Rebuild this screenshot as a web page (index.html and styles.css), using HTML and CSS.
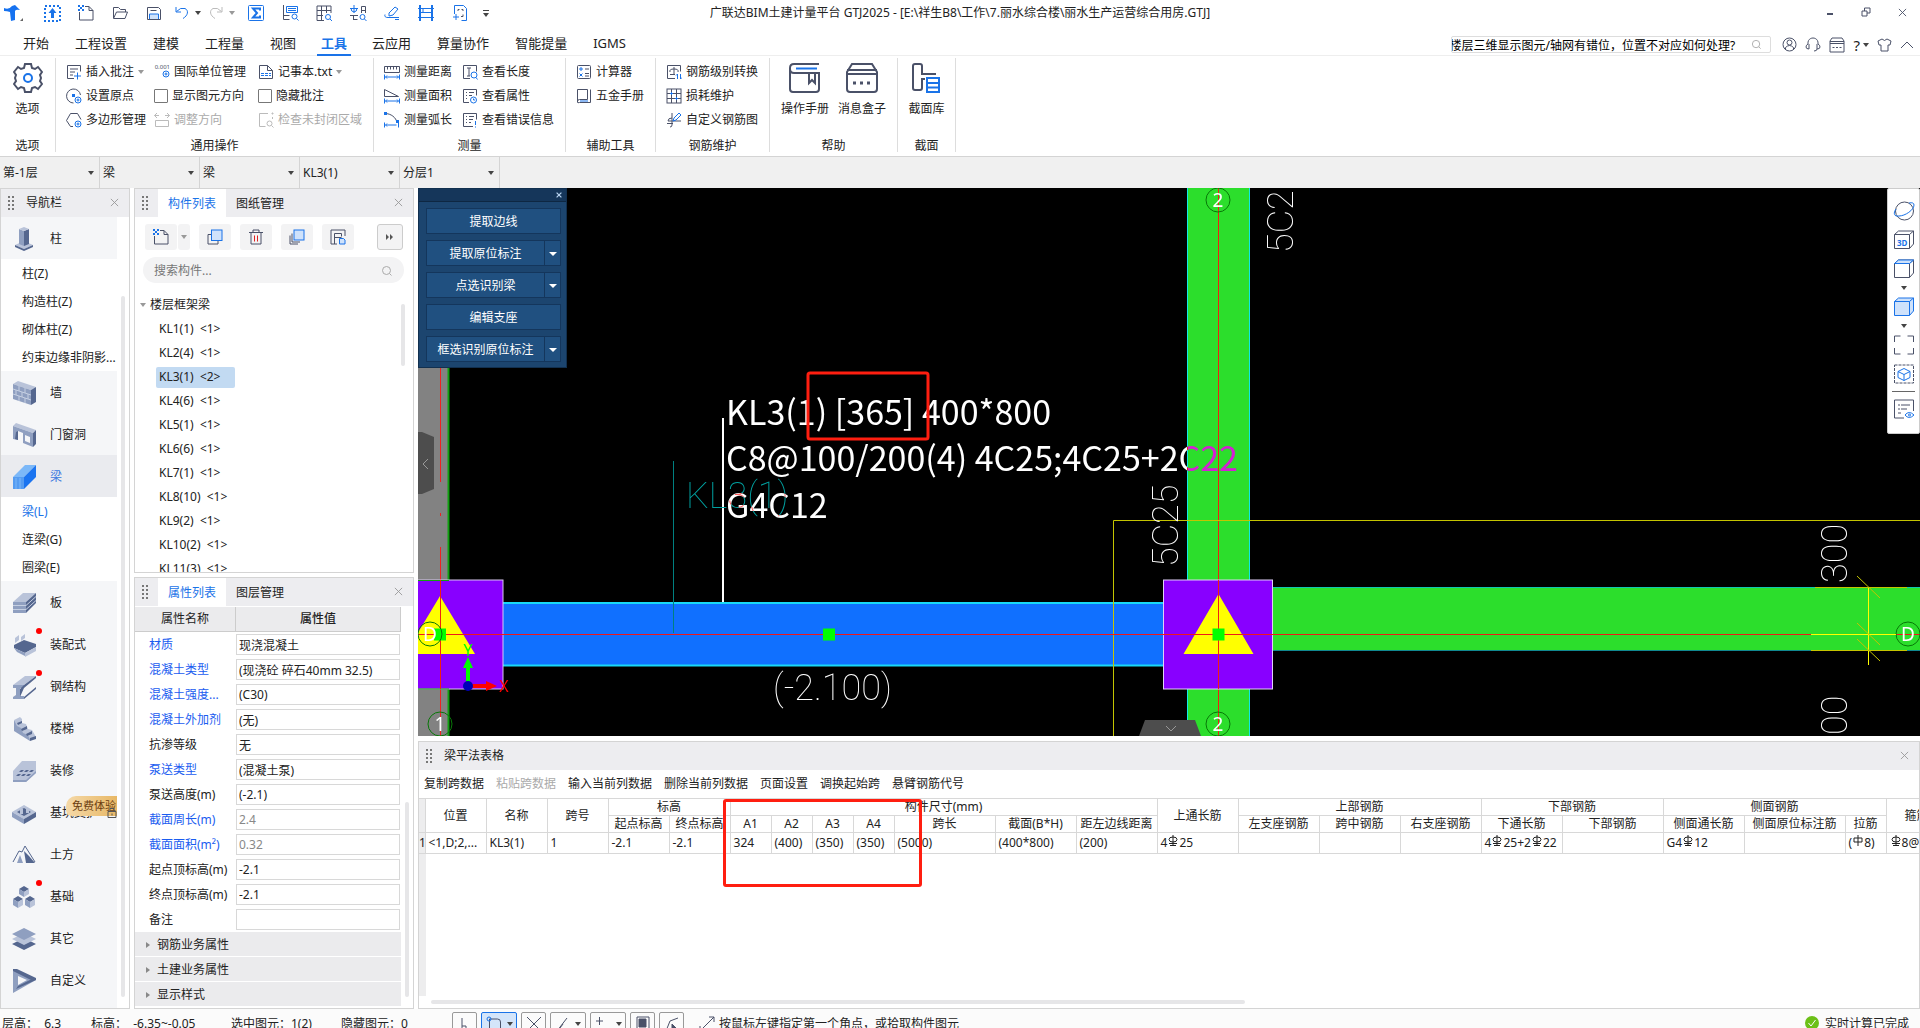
FILE: index.html
```html
<!DOCTYPE html>
<html lang="zh-CN">
<head>
    <meta charset="UTF-8">
    <meta name="viewport" content="width=device-width, initial-scale=1.0">
    <title>广联达BIM土建计量平台 GTJ2025</title>
    <link rel="stylesheet" href="styles.css">
</head>
<body>
    <!-- shared icons -->
    <svg class="sprite" aria-hidden="true">
        <symbol id="i-close" viewBox="0 0 10 10"><path d="M1 1l8 8M9 1l-8 8"/></symbol>
        <symbol id="i-grip" viewBox="0 0 8 14"><path class="dot" d="M1 0h2v2h-2zM5 0h2v2h-2zM1 4h2v2h-2zM5 4h2v2h-2zM1 8h2v2h-2zM5 8h2v2h-2zM1 12h2v2h-2zM5 12h2v2h-2z"/></symbol>
        <symbol id="i-search" viewBox="0 0 12 12"><circle cx="5.5" cy="5.5" r="4"/><path d="M8.5 8.5l2 2"/></symbol>
        <symbol id="i-new" viewBox="0 0 16 16"><path d="M7 1.5h4l4 4v9.500h-13.500v-8M11 1.500v4h4"/><path class="fb" d="M0 0h2v2h2v2h-2v-2h-2zM4 0h2v2h-2zM0 4h2v2h-2zM4 4h2v2h-2z"/></symbol>
        <symbol id="i-ruler" viewBox="0 0 16 16"><path d="M.5 2.5h15v6h-15zM3.5 2.5v3M6.5 2.5v3M9.5 2.5v3M12.5 2.5v3"/><path class="b" d="M1.5 13h13M.5 10.5v5M15.5 10.5v5M3 11.5l-1.5 1.5 1.5 1.5M13 11.5l1.5 1.5-1.5 1.5"/></symbol>
        <symbol id="i-area" viewBox="0 0 16 16"><path d="M.5 1.5l14 7h-14z"/><path class="b" d="M1.5 13h13M.5 10.5v5M15.5 10.5v5M3 11.5l-1.5 1.5 1.5 1.5M13 11.5l1.5 1.5-1.5 1.5"/></symbol>
        <symbol id="i-arc" viewBox="0 0 16 16"><path d="M1 1.5c6 0 11 4 12 9"/><path class="fb" d="M0 0h3v3h-3zM12 8h3v3h-3z"/><path class="b" d="M1.5 13h11M.5 10.5v5M14.5 11v4.5M3 11.5l-1.5 1.5 1.5 1.5"/></symbol>
        <symbol id="i-note" viewBox="0 0 16 16"><path d="M8 14.5h-6.5v-13h13v6M4 5h8M4 8h5M4 11h3"/><path class="b" d="M8 12h7M11.5 8.5v7"/></symbol>
        <symbol id="i-origin" viewBox="0 0 16 16"><path d="M14.5 7a7 7 0 1 0-7 8"/><path class="fb" d="M6 6h3v3h-3z"/><circle class="b" cx="12" cy="12" r="3"/><circle class="b" cx="12" cy="12" r="1"/></symbol>
        <symbol id="i-poly" viewBox="0 0 16 16"><path d="M7 14.5h-2.5l-4-6 4-7h7l3.5 6"/><circle class="b" cx="12" cy="12" r="3"/><circle class="b" cx="12" cy="12" r="1"/></symbol>
        <symbol id="i-txt" viewBox="0 0 16 16"><path d="M1.5 1.5h8l5 5v8h-13zM9.5 1.5v5h5"/><path class="b" d="M3 9.5h10M3 11.5h10" stroke-dasharray="3 1"/></symbol>
        <symbol id="i-adjust" viewBox="0 0 16 16"><path d="M1.5 8.5h13v6h-13zM5 3.5h-4.5M3 1l-2.5 2.5 2.5 2.5M11 3.5h4.5M13 1l2.5 2.5-2.5 2.5"/></symbol>
        <symbol id="i-region" viewBox="0 0 16 16"><path d="M10 1.5h-8.5v13h6M14.5 5v2"/><path d="M14 1h1v1h-1z"/><circle cx="11.5" cy="11.5" r="2.5"/><path d="M13.5 13.5l2 2"/></symbol>
        <symbol id="i-len" viewBox="0 0 16 16"><path d="M8 14.5h-6.5v-13h13v6M5 4h4M7 4v8M5 12h3"/><circle class="b" cx="12" cy="11" r="3"/><path class="b" d="M14 13.5l1.5 2"/></symbol>
        <symbol id="i-props" viewBox="0 0 16 16"><path d="M7 14.5h-5.5v-13h13v6M4 4.5h1M7 4.5h5M4 7.5h1M7 7.5h3M4 10.5h1"/><circle class="b" cx="11.5" cy="12" r="3"/><path class="b" d="M11.5 10.5v1.5h1.5"/></symbol>
        <symbol id="i-err" viewBox="0 0 16 16"><path d="M11 14.5h-9.5v-13h13v6M4 4.5h1M7 4.5h5M4 7.5h1M7 7.5h4M4 10.5h1M7 10.5h2"/><path class="b" d="M13.5 9v4M13.5 14.5v1"/></symbol>
        <symbol id="i-cube" viewBox="0 0 22 20"><path d="M1.5 4.5l4-3.5h15v13l-4 4.5h-15zM1.5 4.5h15v14M16.5 4.5l4-3.5"/></symbol>
        <symbol id="rebar" viewBox="0 0 10 12"><ellipse cx="5" cy="4.5" rx="4" ry="2.5"/><path d="M5 0v10M1 8.5h8M2 10.5h6"/></symbol>
        <symbol id="rebar1" viewBox="0 0 10 12"><path d="M1 3h8v4h-8zM5 0v11"/></symbol>
    </svg>

    <header class="titlebar">
        <div class="quick">
            <svg class="logo" width="22" height="18" viewBox="0 0 22 18"><path d="M1 4q5 2 8-2l3-1 5 5q-4-1-5 1v9l-4 1-1-9q-3-1-6-1z" fill="#1672f0"/><path d="M17 17h3v-3z" fill="#666"/></svg>
            <button aria-label="上传"><svg class="ic" width="17" height="17" viewBox="0 0 17 17"><path class="b" stroke-width="2" stroke-dasharray="2 2" d="M1 1h15v15h-15z"/><path class="fb" d="M8.5 3l4 5h-2.5v5h-3v-5h-2.500z"/></svg></button>
            <button aria-label="新建"><svg class="ic" width="16" height="16"><use href="#i-new"/></svg></button>
            <button aria-label="打开"><svg class="ic" width="16" height="16" viewBox="0 0 16 16"><path d="M1.5 13v-10.5h5l2 2h5v2.5M1.5 13.5l3-6.5h11l-2.5 6.5z"/></svg></button>
            <button aria-label="保存"><svg class="ic" width="16" height="16" viewBox="0 0 16 16"><path d="M1.5 2.5h11l2 2v10h-13zM4.5 5.5h6"/><path class="b lt" d="M3.5 14v-5h9v5"/></svg></button>
            <button aria-label="撤销"><svg class="ic" width="14" height="16" viewBox="0 0 14 16"><path class="b" d="M1 2v5h5M1.5 6.5q4-4.500 8.500-3c4 2 3 7-2 10"/></svg><i class="caret"></i></button>
            <button aria-label="重做"><svg class="ic dis" width="14" height="16" viewBox="0 0 14 16"><path d="M13 2v5h-5M12.5 6.5q-4-4.500-8.500-3c-4 2-3 7 2 10"/></svg><i class="caret grey"></i></button>
            <button aria-label="汇总"><svg class="ic" width="16" height="16" viewBox="0 0 16 16"><rect class="b" x=".5" y=".5" width="15" height="15" rx="1"/><path class="b" stroke-width="2" d="M12 5.500v-2h-7l4 4.500-4 4.500h7v-2"/></svg></button>
            <button aria-label="查量"><svg class="ic" width="17" height="16" viewBox="0 0 17 16"><path d="M1.5 0v14.5h6M1.5 10.5h6"/><path class="b" d="M4.500 1.500h11v6h-11zM6 3.500h8M6 5.500h8"/><circle class="b" cx="12.5" cy="11.5" r="2.5"/><path class="b" d="M14.5 13.5l2 2"/></svg></button>
            <button aria-label="查表"><svg class="ic" width="16" height="16" viewBox="0 0 16 16"><path d="M8 15.5h-7v-14.500h14v7M1 5.500h14M1 10.500h6M5.500 1v14M10.500 1v7"/><circle class="b" cx="12" cy="12" r="2.5"/><path class="b" d="M14 14l2 2"/></svg></button>
            <button aria-label="钢筋"><svg class="ic" width="17" height="16" viewBox="0 0 17 16"><path class="b" d="M0 3.500h8M4 0v8M1 3q0 4 3 4t3-4"/><path d="M11.500 8v-6.500h4v6.500M11.500 5.500h4M0 10.500h8M3.500 10.500v4.500M3.500 14.500h4"/><circle class="b" cx="12.5" cy="12" r="2.5"/><path class="b" d="M14.5 14l2 2"/></svg></button>
            <button aria-label="编辑"><svg class="ic" width="16" height="16" viewBox="0 0 16 16"><path class="b" d="M5 8l6-6 3 2-5 6-4 1zM1 9.500q-1 3 3 3h11M11 14.500h4"/></svg></button>
            <button aria-label="梁"><svg class="ic" width="16" height="16" viewBox="0 0 16 16"><path class="b" stroke-width="2" d="M2 0v16M14 0v16"/><path class="b" d="M0 3.500h16M3 7.500h10M0 12.500h16M5 3.500v4"/></svg></button>
            <button aria-label="识别"><svg class="ic" width="17" height="16" viewBox="0 0 17 16"><path class="b" d="M2.500 9v-8.500h9l3 3v12h-5M1 12h6M4 9v6"/><path d="M6 6v-1.500h1.500M11 6v-1.500h-1.500M11 9.500v2h-2"/></svg></button>
            <button class="narrow" aria-label="更多"><span class="over"></span><i class="caret"></i></button>
        </div>
        <h1>广联达BIM土建计量平台 GTJ2025 - [E:\祥生B8\工作\7.丽水综合楼\丽水生产运营综合用房.GTJ]</h1>
        <div class="winbtns">
            <button aria-label="最小化"><svg class="ic" width="10" height="10" viewBox="0 0 10 10"><path stroke-width="2" d="M2 7h6"/></svg></button>
            <button aria-label="还原"><svg class="ic" width="10" height="10" viewBox="0 0 10 10"><path d="M1 4h5v5h-5zM3.5 4v-3h5.500v5h-3"/></svg></button>
            <button aria-label="关闭"><svg class="ic" width="9" height="9"><use href="#i-close"/></svg></button>
        </div>
    </header>

    <nav class="tabs">
        <a href="#">开始</a><a href="#">工程设置</a><a href="#">建模</a><a href="#">工程量</a><a href="#">视图</a><a href="#" class="active">工具</a><a href="#">云应用</a><a href="#">算量协作</a><a href="#">智能提量</a><a href="#">IGMS</a>
        <div class="tabs-right">
            <div class="help-search"><input type="text" aria-label="搜索帮助" value="楼层三维显示图元/轴网有错位，位置不对应如何处理?"><svg class="ic grey-ic" width="11" height="11"><use href="#i-search"/></svg></div>
            <svg class="ic" width="15" height="15" viewBox="0 0 15 15"><circle cx="7.5" cy="7.5" r="6.5"/><circle cx="7.5" cy="5.5" r="2.5"/><path d="M3.5 12v-1.500q4-4 8 0v1.500"/></svg>
            <svg class="ic" width="16" height="15" viewBox="0 0 16 15"><path d="M3 7c-1-8 11-8 10 0M3 7q-2 1-2 3t3 2v-5M13 7q2 1 2 3t-3 2v-5M12 12q0 2-3 2"/></svg>
            <svg class="ic" width="16" height="16" viewBox="0 0 16 16"><path d="M1 4l2-3h10l2 3v11h-14zM1 4.500h14M1 6.500h14M3.500 10.500h2M7 10.500h2M10.500 10.500h2"/></svg>
            <span class="help">?<i class="caret"></i></span>
            <svg class="ic" width="15" height="14" viewBox="0 0 15 14"><path d="M5 1q2.500 3 5 0l4 2-1 4h-2v6h-7v-6h-2l-1-4z"/></svg>
            <svg class="ic" width="14" height="8" viewBox="0 0 14 8"><path d="M1 7l6-6 6 6"/></svg>
        </div>
    </nav>

    <section class="ribbon">
        <div class="group g-options">
            <div class="bigs">
                <button class="big"><svg class="ic" width="30" height="30" viewBox="0 0 30 30"><path stroke-width="2" d="M12 1h6l1 4 3 1 3-2 4 5-2 3 1 3-1 3 2 3-4 5-3-2-3 1-1 4h-6l-1-4-3-1-3 2-4-5 2-3-1-3 1-3-2-3 4-5 3 2 3-1z"/><circle class="b" stroke-width="2" cx="15" cy="15" r="4"/></svg>选项</button>
            </div>
            <h2>选项</h2>
        </div>
        <div class="group g-common">
            <div class="cols">
                <div class="col"><button><svg class="ic" width="16" height="16"><use href="#i-note"/></svg>插入批注<i class="caret grey"></i></button><button><svg class="ic" width="16" height="16"><use href="#i-origin"/></svg>设置原点</button><button><svg class="ic" width="16" height="16"><use href="#i-poly"/></svg>多边形管理</button></div>
                <div class="col"><button><span class="unit">0.001<svg class="ic" width="8" height="8" viewBox="0 0 8 8"><circle class="b" cx="4" cy="4" r="3"/><circle class="b" cx="4" cy="4" r="1"/></svg></span>国际单位管理</button><label><input type="checkbox">显示图元方向</label><button disabled><svg class="ic" width="16" height="16"><use href="#i-adjust"/></svg>调整方向</button></div>
                <div class="col"><button><svg class="ic" width="16" height="16"><use href="#i-txt"/></svg>记事本.txt<i class="caret grey"></i></button><label><input type="checkbox">隐藏批注</label><button disabled><svg class="ic" width="16" height="16"><use href="#i-region"/></svg>检查未封闭区域</button></div>
            </div>
            <h2>通用操作</h2>
        </div>
        <div class="group g-measure">
            <div class="cols">
                <div class="col"><button><svg class="ic" width="16" height="16"><use href="#i-ruler"/></svg>测量距离</button><button><svg class="ic" width="16" height="16"><use href="#i-area"/></svg>测量面积</button><button><svg class="ic" width="16" height="16"><use href="#i-arc"/></svg>测量弧长</button></div>
                <div class="col"><button><svg class="ic" width="16" height="16"><use href="#i-len"/></svg>查看长度</button><button><svg class="ic" width="16" height="16"><use href="#i-props"/></svg>查看属性</button><button><svg class="ic" width="16" height="16"><use href="#i-err"/></svg>查看错误信息</button></div>
            </div>
            <h2>测量</h2>
        </div>
        <div class="group g-aux">
            <div class="cols"><div class="col">
                <button><svg class="ic" width="16" height="16" viewBox="0 0 16 16"><rect x="1.5" y="1.5" width="13" height="13" rx="1"/><path class="b" d="M3 5h4M5 3v4M3.500 9.500l3 3M6.500 9.500l-3 3"/><path d="M9 5h4M9 9.500h4M9 12h4"/></svg>计算器</button>
                <button><svg class="ic" width="16" height="16" viewBox="0 0 16 16"><path d="M1.5 14.5v-13h10v10h-8q-2 0-2 2t2 1h11v-13"/><path class="b" d="M4 13h8"/></svg>五金手册</button>
            </div></div>
            <h2>辅助工具</h2>
        </div>
        <div class="group g-rebar">
            <div class="cols"><div class="col">
                <button><svg class="ic" width="16" height="16" viewBox="0 0 16 16"><path d="M9 14.5h-7.500v-13h13v6M8 3v7M4 8q-1-3 4-3t4 3M4 10.500h5"/><path class="b" d="M11.500 15v-5l-1.500 1.500M14.500 10v5l1.500-1.500"/></svg>钢筋级别转换</button>
                <button><svg class="ic" width="16" height="16" viewBox="0 0 16 16"><rect x="1" y="1" width="14" height="14"/><path d="M1 5.500h14M1 10.500h14M5.500 1v14M10.500 1v14"/><path class="b" d="M5.500 4v3M4 5.500h3M10.500 9v3M9 10.500h3"/></svg>损耗维护</button>
                <button><svg class="ic" width="16" height="16" viewBox="0 0 16 16"><path d="M6 1v12q0 2-2 2M6 6q-4 0-4 3h13M1 11.500h6"/><path class="b" d="M7 9l1-3 5-5 2 2-5 5z"/></svg>自定义钢筋图</button>
            </div></div>
            <h2>钢筋维护</h2>
        </div>
        <div class="group g-help">
            <div class="bigs">
                <button class="big"><svg class="ic" width="32" height="30" viewBox="0 0 32 30"><path stroke-width="2" d="M30 1h-25q-4 0-4 4v21q0 3 3 3h23q3 0 3-3v-16h-25q-4 0-4-4M20 10v10l3-3 3 3v-10"/><path class="b" stroke-width="2" d="M7 5.500h21"/></svg>操作手册</button>
                <button class="big"><svg class="ic" width="32" height="30" viewBox="0 0 32 30"><path stroke-width="2" d="M1 9l5-8h20l5 8v17q0 3-3 3h-24q-3 0-3-3zM1 7h30M1 11h30"/><path stroke-width="3" d="M7 20h3M14 20h3M21 20h3"/></svg>消息盒子</button>
            </div>
            <h2>帮助</h2>
        </div>
        <div class="group g-section">
            <div class="bigs">
                <button class="big"><svg class="ic" width="30" height="30" viewBox="0 0 30 30"><path stroke-width="2" d="M25 11h-14v-8q0-2-2-2h-5q-2 0-2 2v22q0 2 2 2h5q2 0 2-2v-9h3"/><path class="b" stroke-width="2" d="M16 15h12v14h-12zM16 20h12M16 24.500h12"/></svg>截面库</button>
            </div>
            <h2>截面</h2>
        </div>
    </section>

    <section class="combos">
        <div class="combo"><select aria-label="楼层"><option>第-1层</option></select><i class="caret"></i></div>
        <div class="combo"><select aria-label="构件大类"><option>梁</option></select><i class="caret"></i></div>
        <div class="combo"><select aria-label="构件类型"><option>梁</option></select><i class="caret"></i></div>
        <div class="combo"><select aria-label="构件"><option>KL3(1)</option></select><i class="caret"></i></div>
        <div class="combo"><select aria-label="分层"><option>分层1</option></select><i class="caret"></i></div>
    </section>

    <main>
        <aside class="panel navpanel">
            <div class="phead"><svg class="grip" width="8" height="14"><use href="#i-grip"/></svg><span>导航栏</span><button class="x" aria-label="关闭"><svg class="ic" width="9" height="9"><use href="#i-close"/></svg></button></div>
            <div class="navbody">
                <ul class="navlist">
                    <li class="cat"><svg width="24" height="24" viewBox="0 0 24 24"><path class="c1" d="M3 18l9-4 9 4-9 4z"/><path class="c3" d="M3 18l9 4 9-4v2l-9 4-9-4z"/><path class="c2" d="M7 2l5 2v15l-5-2z"/><path class="c3" d="M12 4l5-2v15l-5 2z"/><path class="c1" d="M7 2l5-2 5 2-5 2z"/></svg>柱</li>
                    <li class="sub">柱(Z)</li>
                    <li class="sub">构造柱(Z)</li>
                    <li class="sub">砌体柱(Z)</li>
                    <li class="sub">约束边缘非阴影...</li>
                    <li class="cat"><svg width="24" height="24" viewBox="0 0 24 24"><path class="c1" d="M1 3l5-3 18 6-5 3z"/><path class="c2" d="M1 3l18 6v15l-18-6z"/><path class="c3" d="M19 9l5-3v15l-5 3z"/><path class="ln" d="M1 8l18 6M1 13l18 6M7 5v5M13 7v5M4 9v5M10 11v5M16 13v5M7 15v5M13 17v5"/></svg>墙</li>
                    <li class="cat"><svg width="24" height="24" viewBox="0 0 24 24"><path class="c1" d="M1 3l3-3 20 7-3 3z"/><path class="c2" fill-rule="evenodd" d="M1 3l20 7v14l-10-4v-10l-5-2v9l-5-1zM13 12v6l5 2v-6z"/><path class="c3" d="M21 10l3-3v14l-3 3zM4 9l2-1v9l-3-1z"/></svg>门窗洞</li>
                    <li class="cat active"><svg width="24" height="24" viewBox="0 0 24 24"><path fill="#7cb8f8" d="M1 12l12-12h11l-12 12z"/><path fill="#559cf2" d="M1 12h11v12h-11z"/><path fill="#1b74f0" d="M12 12l12-12v12l-12 12z"/><path class="ln" d="M4 13v11M8 13v11"/></svg>梁</li>
                    <li class="sub on">梁(L)</li>
                    <li class="sub">连梁(G)</li>
                    <li class="sub">圈梁(E)</li>
                    <li class="cat"><svg width="24" height="24" viewBox="0 0 24 24"><path class="c1" d="M1 11l10-9h13l-10 9z"/><path class="c2" d="M1 11h13v11h-13z"/><path class="c3" d="M14 11l10-9v10l-10 10z"/><path class="ln" d="M1 14.500h13l10-9M1 18.500h13l10-9"/></svg>板</li>
                    <li class="cat"><svg width="24" height="24" viewBox="0 0 24 24"><path class="c1" d="M3 5l4-3v5l-4 3zM9 4l4-3v4l-4 3z"/><path class="c3" d="M2 12l10-5 12 4v3l-11 6-11-5z"/><path class="c2" d="M2 15l11 5v3l-8-4z"/><path class="c1" d="M13 20l11-6v4l-11 6z"/></svg>装配式<b class="red"></b></li>
                    <li class="cat"><svg width="24" height="24" viewBox="0 0 24 24"><path class="c1" d="M1 10l12-9h11l-12 9z"/><path class="c2" d="M1 10h11v3h-4v8h4v3h-11v-2l3-2v-7h-3z"/><path class="c3" d="M12 10l12-9v2l-12 10-4 9v-8zM12 22l12-10v2l-12 10z"/></svg>钢结构<b class="red"></b></li>
                    <li class="cat"><svg width="24" height="24" viewBox="0 0 24 24"><path class="c2" d="M2 3l16 16v5l-16-10z"/><path class="c1" d="M2 3l6-3 2 2v4l4 1 2 5 4 1 4 7-6 3-2-5-5-2-2-5-4-2z"/><path class="c3" d="M5 6l5-2v2l-4 2zM9 12l6-3v3l-5 2zM14 17l6-3v3l-5 2zM18 24v-3l6-2v3z"/></svg>楼梯</li>
                    <li class="cat"><svg width="24" height="24" viewBox="0 0 24 24"><path class="c1" d="M1 12l9-10h14v12l-10 9h-13z"/><path class="c2" d="M1 21h13l10-9v2l-10 9h-13z"/><path class="c3" d="M9 11h3l-2 2h-3zM14 11h3l-2 2h-3zM19 11h3l-2 2h-3zM6 15h3l-2 2h-3zM11 15h3l-2 2h-3zM16 15h3l-2 2h-3z"/></svg>装修</li>
                    <li class="cat"><svg width="24" height="24" viewBox="0 0 24 24"><path class="c1" d="M0 11l12-7 12 7-12 7z"/><path class="c3" d="M5 11l7-4 7 4-7 4z"/><path class="c1" d="M8 8h3v5h-3zM14 7h3v5h-3z"/><path class="c2" d="M0 11l12 7v5l-12-7z"/><path class="c3" d="M24 11l-12 7v5l12-7z"/></svg>基坑支护<span class="trial">免费体验</span><svg class="lock" width="10" height="12" viewBox="0 0 10 12"><path d="M1 4.500h8v6h-8zM3 4.500v-3h4v3M5 6.500v2"/></svg></li>
                    <li class="cat"><svg width="24" height="24" viewBox="0 0 24 24"><path class="mt" d="M1 19l6-11 3 1 3-6 5 8 5 8"/><path class="c3" d="M12 8l5 5 6 7h-9z"/><path class="c2" d="M8 12l3 8h-6z"/></svg>土方</li>
                    <li class="cat"><svg width="24" height="24" viewBox="0 0 24 24"><path class="c3" d="M7 4l5-3 5 3-5 3zM1 14l5-3 5 3-5 3zM13 14l5-3 5 3-5 3z"/><path class="c2" d="M7 4l5 3v5l-5-3zM1 14l5 3v6l-5-3zM13 14l5 3v6l-5-3z"/><path class="c1" d="M17 4l-5 3v5l5-3zM11 14l-5 3v6l5-3zM23 14l-5 3v6l5-3z"/></svg>基础<b class="red"></b></li>
                    <li class="cat"><svg width="24" height="24" viewBox="0 0 24 24"><path class="c3" d="M0 17l12-6 12 6-12 6z"/><path class="c1" d="M0 12l12-6 12 6-12 6z"/><path class="c2" d="M0 7l12-6 12 6-12 6z"/></svg>其它</li>
                    <li class="cat"><svg width="24" height="24" viewBox="0 0 24 24"><path class="c2" fill-rule="evenodd" d="M1 0l23 11-23 13zM6 7v9l9-5z"/><path class="c3" d="M1 0l4 0 19 9v2l-3 1-20-10zM4 20l2-3 14-7 4 1z"/></svg>自定义</li>
                </ul>
                <div class="vscroll nav-scroll"></div>
            </div>
        </aside>

        <div class="mid">
            <section class="panel complist">
                <div class="phead"><svg class="grip" width="8" height="14"><use href="#i-grip"/></svg><button class="ptab on">构件列表</button><button class="ptab">图纸管理</button><button class="x" aria-label="关闭"><svg class="ic" width="9" height="9"><use href="#i-close"/></svg></button></div>
                <div class="ctools">
                    <div class="split"><button aria-label="新建构件"><svg class="ic" width="16" height="16"><use href="#i-new"/></svg></button><button class="dd" aria-label="新建选项"><i class="caret grey"></i></button></div>
                    <button aria-label="复制"><svg class="ic" width="16" height="16" viewBox="0 0 16 16"><path d="M4 5.500h-3v9.500h10v-3"/><rect class="b lt" x="4.5" y="1" width="10.5" height="10.5"/></svg></button>
                    <button aria-label="删除"><svg class="ic" width="16" height="16" viewBox="0 0 16 16"><path d="M1 3.500h14M3 3.500v11.500h10v-11.500M5 3v-2h6v2"/><path stroke="#e02020" d="M6.500 6.500v6M9.500 6.500v6"/></svg></button>
                    <button aria-label="层间复制"><svg class="ic" width="16" height="16" viewBox="0 0 16 16"><path d="M3 4.500v8.500h8M1 6.500v8.500h8"/><rect class="b lt" x="5" y="1" width="10" height="10"/></svg></button>
                    <button aria-label="存档"><svg class="ic" width="16" height="16" viewBox="0 0 16 16"><path d="M7 15h-6v-14h14v6M4.500 15v-10.500h7v3M4.500 8.500h7"/><path class="b lt" d="M9.500 9.500h4l1.500 1.500v4h-5.500z"/></svg></button>
                    <button class="more" aria-label="更多"><svg width="8" height="6" viewBox="0 0 8 6"><path d="M0 0l3 3-3 3zM4 0l3 3-3 3z" fill="#555"/></svg></button>
                </div>
                <div class="csearch"><input type="text" aria-label="搜索构件" placeholder="搜索构件..."><svg class="ic grey-ic" width="12" height="12"><use href="#i-search"/></svg></div>
                <div class="treewrap">
                    <ul class="tree">
                        <li class="root"><i class="caret grey"></i>楼层框架梁</li>
                        <li>KL1(1)&nbsp; &lt;1&gt;</li>
                        <li>KL2(4)&nbsp; &lt;1&gt;</li>
                        <li class="sel">KL3(1)&nbsp; &lt;2&gt;</li>
                        <li>KL4(6)&nbsp; &lt;1&gt;</li>
                        <li>KL5(1)&nbsp; &lt;1&gt;</li>
                        <li>KL6(6)&nbsp; &lt;1&gt;</li>
                        <li>KL7(1)&nbsp; &lt;1&gt;</li>
                        <li>KL8(10)&nbsp; &lt;1&gt;</li>
                        <li>KL9(2)&nbsp; &lt;1&gt;</li>
                        <li>KL10(2)&nbsp; &lt;1&gt;</li>
                        <li>KL11(3)&nbsp; &lt;1&gt;</li>
                    </ul>
                    <div class="vscroll tree-scroll"></div>
                </div>
            </section>

            <section class="panel props">
                <div class="phead"><svg class="grip" width="8" height="14"><use href="#i-grip"/></svg><button class="ptab on">属性列表</button><button class="ptab">图层管理</button><button class="x" aria-label="关闭"><svg class="ic" width="9" height="9"><use href="#i-close"/></svg></button></div>
                <div class="pbody">
                    <div class="plist">
                        <div class="prow ph"><span>属性名称</span><b>属性值</b></div>
                        <div class="prow"><label class="blue" for="p1">材质</label><input id="p1" value="现浇混凝土"></div>
                        <div class="prow"><label class="blue" for="p2">混凝土类型</label><input id="p2" value="(现浇砼 碎石40mm 32.5)"></div>
                        <div class="prow"><label class="blue" for="p3">混凝土强度...</label><input id="p3" value="(C30)"></div>
                        <div class="prow"><label class="blue" for="p4">混凝土外加剂</label><input id="p4" value="(无)"></div>
                        <div class="prow"><label for="p5">抗渗等级</label><input id="p5" value="无"></div>
                        <div class="prow"><label class="blue" for="p6">泵送类型</label><input id="p6" value="(混凝土泵)"></div>
                        <div class="prow"><label for="p7">泵送高度(m)</label><input id="p7" value="(-2.1)"></div>
                        <div class="prow"><label class="blue" for="p8">截面周长(m)</label><input id="p8" class="ro" readonly value="2.4"></div>
                        <div class="prow"><label class="blue" for="p9">截面面积(m²)</label><input id="p9" class="ro" readonly value="0.32"></div>
                        <div class="prow"><label for="p10">起点顶标高(m)</label><input id="p10" value="-2.1"></div>
                        <div class="prow"><label for="p11">终点顶标高(m)</label><input id="p11" value="-2.1"></div>
                        <div class="prow"><label for="p12">备注</label><input id="p12" value=""></div>
                        <button class="pgroup"><i class="tri"></i>钢筋业务属性</button>
                        <button class="pgroup"><i class="tri"></i>土建业务属性</button>
                        <button class="pgroup"><i class="tri"></i>显示样式</button>
                    </div>
                    <div class="vscroll prop-scroll"></div>
                </div>
            </section>
        </div>

        <div class="work">
            <section class="canvas">
                <svg class="drawing" width="100%" height="100%">
                    <g transform="translate(-418 -188)">
                        <!-- axis 1 wall -->
                        <rect x="418" y="188" width="30" height="548" fill="#828282"/>
                        <path d="M448.500 188v548" stroke="#12a012" stroke-width="2"/>
                        <path d="M440.500 188v294M440.500 513v3M440.500 547v189" stroke="#f02020"/>
                        <!-- beams -->
                        <rect x="1187" y="188" width="63" height="548" fill="#2cde2c"/>
                        <path d="M1187.500 188v548M1249.500 188v548" stroke="#10e8e8"/>
                        <rect x="1273" y="587" width="647" height="63" fill="#2cde2c"/>
                        <path d="M1273 587.500h647" stroke="#10c8b0"/>
                        <path d="M1273 650.500h647" stroke="#108890"/>
                        <path d="M1218.500 188v548" stroke="#f02010"/>
                        <rect x="502" y="602" width="661" height="64" fill="#1070ff"/>
                        <path d="M502 603h661M502 665.500h661" stroke="#18d8f8" stroke-width="2"/>
                        <path d="M673.500 461v172" stroke="#008080"/>
                        <path d="M723 418v184" stroke="#fff" stroke-width="2"/>
                        <path d="M1113.500 736v-215.500h806.500" fill="none" stroke="#c4c400"/>
                        <!-- supports -->
                        <rect x="417" y="580" width="86" height="109" fill="#8800ff" stroke="#d8c8f0"/>
                        <path d="M418 580.500h31M418 689h31" stroke="#12a012"/>
                        <rect x="1163.500" y="580" width="109" height="109" fill="#8800ff" stroke="#e0d0f8"/>
                        <path d="M440 596l35 58h-70zM1218.500 594l35 60h-70z" fill="#ff0"/>
                        <path d="M440.500 580v109M1218.500 580v109" stroke="#f02010"/>
                        <path d="M418 634.500h1502" stroke="#f01818"/>
                        <path d="M434 628.500h12v12h-12zM823 628.500h12v12h-12zM1212.500 628.500h12v12h-12z" fill="#0f0"/>
                        <!-- axis bubbles -->
                        <g fill="none" stroke="#087808"><circle cx="430" cy="634" r="12"/><circle cx="440" cy="724" r="12"/><circle cx="1218" cy="200" r="12"/><circle cx="1218" cy="724" r="12"/><circle cx="1908" cy="634" r="12"/></g>
                        <!-- dimension -->
                        <path d="M1868.500 587v78M1811 634.500h85" stroke="#ff0"/>
                        <path d="M1815 587.500h92M1811 650.500h96M1857 576l23 22M1857 623l23 22M1857 639l23 22" stroke="#c4c400"/>
                        <g class="bubble"><text x="430" y="641">D</text><text x="440" y="731">1</text><text x="1218" y="207">2</text><text x="1218" y="731">2</text><text x="1908" y="641">D</text></g>
                        <!-- view axes -->
                        <path d="M468 686v-20" stroke="#0f0" stroke-width="4"/><path d="M468 657l5 11h-10z" fill="#0f0"/>
                        <path d="M468 686h20" stroke="#f00" stroke-width="4"/><path d="M497 686l-11-5v10z" fill="#f00"/>
                        <circle cx="468" cy="686" r="5" fill="#0000b8"/>
                        <g class="axes"><text x="468" y="656" fill="#0f0">Y</text><text x="504" y="692" fill="#f00">X</text></g>
                        <!-- cad labels -->
                        <g class="cad">
                            <text class="teal" x="686" y="508">KL3(1)</text>
                            <text x="773" y="700">(-2.100)</text>
                            <text transform="translate(1178 567) rotate(-90)">5C25</text>
                            <text transform="translate(1293 253) rotate(-90)">5C2</text>
                            <text transform="translate(1847 583) rotate(-90)">300</text>
                            <text transform="translate(1847 735) rotate(-90)">00</text>
                        </g>
                        <g class="mark"><text x="726" y="425">KL3(1) [365] 400*800</text><text x="726" y="471">C8@100/200(4) 4C25;4C25+2C22</text><text x="726" y="518">G4C12</text></g>
                        <path d="M418 432h4l12 5v52l-12 5h-4z" fill="#4d4d4d"/><path d="M428 459l-5 5 5 5" fill="none" stroke="#999"/>
                        <path d="M1139 736l6-16h50l6 16z" fill="#4d4d4d"/><path d="M1166 726l5 5 5-5" fill="none" stroke="#999"/>
                        <rect x="808" y="373" width="120" height="66" rx="2" fill="none" stroke="#ff1e10" stroke-width="3"/>
                    </g>
                </svg>
                <div class="cadbox">
                    <div class="cadhead"><button aria-label="关闭"><svg width="6" height="6" viewBox="0 0 10 10"><use href="#i-close"/></svg></button></div>
                    <div class="cadrow"><button>提取边线</button></div>
                    <div class="cadrow"><button>提取原位标注</button><button class="dd" aria-label="展开"><i class="caret"></i></button></div>
                    <div class="cadrow"><button>点选识别梁</button><button class="dd" aria-label="展开"><i class="caret"></i></button></div>
                    <div class="cadrow"><button>编辑支座</button></div>
                    <div class="cadrow"><button>框选识别原位标注</button><button class="dd" aria-label="展开"><i class="caret"></i></button></div>
                </div>
                <div class="viewbar">
                    <button aria-label="动态观察"><svg class="ic" width="22" height="20" viewBox="0 0 22 20"><circle cx="11.5" cy="10" r="9"/><path class="b" d="M16 2q5-1 5 2c0 5-9 11-15 11-5 1-6-3-3-7"/></svg></button>
                    <button aria-label="三维"><svg class="ic" width="22" height="20"><use href="#i-cube"/><text x="4" y="16">3D</text></svg></button>
                    <button aria-label="俯视"><svg class="ic" width="22" height="20"><use href="#i-cube"/><path class="b lt" d="M1.5 4.500l4-3.500h15l-4 3.500z"/></svg></button>
                    <i class="caret"></i>
                    <button aria-label="实体"><svg class="ic cubeb" width="22" height="20"><use href="#i-cube"/></svg></button>
                    <i class="caret"></i>
                    <button aria-label="全屏"><svg class="ic" width="22" height="20" viewBox="0 0 22 20"><path d="M1.5 7v-6h6M14.500 1h6v6M20.500 13v6h-6M7.500 19h-6v-6"/></svg></button>
                    <button aria-label="局部三维"><svg class="ic" width="22" height="20" viewBox="0 0 22 20"><rect x="1.5" y="1" width="19" height="18" stroke-dasharray="3 1"/><path class="b" d="M11 4.500l6 3v6l-6 3-6-3v-6zM5 7.500l6 3 6-3M11 10.500v6"/></svg></button>
                    <hr>
                    <button aria-label="显示设置"><svg class="ic" width="22" height="20" viewBox="0 0 22 20"><path d="M11 19h-9.500v-18h19v11M5 6h2M8 6h9M5 10h2M8 10h6M5 14h3"/><path class="b" d="M12 16q4-5 9 0-5 5-9 0z"/><circle class="b" cx="16.5" cy="16" r="1"/></svg></button>
                </div>
            </section>

            <section class="panel gridpanel">
                <div class="phead"><svg class="grip" width="8" height="14"><use href="#i-grip"/></svg><span>梁平法表格</span><button class="x" aria-label="关闭"><svg class="ic" width="9" height="9"><use href="#i-close"/></svg></button></div>
                <div class="gtools"><button>复制跨数据</button><button disabled>粘贴跨数据</button><button>输入当前列数据</button><button>删除当前列数据</button><button>页面设置</button><button>调换起始跨</button><button>悬臂钢筋代号</button></div>
                <div class="gwrap">
                    <table>
                        <colgroup><col class="w6"><col class="w61" span="5"><col class="w41" span="4"><col class="w101"><col class="w81" span="7"><col class="w101"><col class="w81"><col class="w101"><col class="w41"><col class="w81"></colgroup>
                        <thead>
                            <tr><th rowspan="2"></th><th rowspan="2">位置</th><th rowspan="2">名称</th><th rowspan="2">跨号</th><th colspan="2">标高</th><th colspan="7">构件尺寸(mm)</th><th rowspan="2">上通长筋</th><th colspan="3">上部钢筋</th><th colspan="2">下部钢筋</th><th colspan="3">侧面钢筋</th><th class="cut" rowspan="2">箍筋</th></tr>
                            <tr><th>起点标高</th><th>终点标高</th><th>A1</th><th>A2</th><th>A3</th><th>A4</th><th>跨长</th><th>截面(B*H)</th><th>距左边线距离</th><th>左支座钢筋</th><th>跨中钢筋</th><th>右支座钢筋</th><th>下通长筋</th><th>下部钢筋</th><th>侧面通长筋</th><th>侧面原位标注筋</th><th>拉筋</th></tr>
                        </thead>
                        <tbody>
                            <tr><td class="num">1</td><td>&lt;1,D;2,...</td><td>KL3(1)</td><td>1</td><td>-2.1</td><td>-2.1</td><td>324</td><td>(400)</td><td>(350)</td><td>(350)</td><td>(5000)</td><td>(400*800)</td><td>(200)</td><td>4<svg class="rb"><use href="#rebar"/></svg>25</td><td></td><td></td><td></td><td>4<svg class="rb"><use href="#rebar"/></svg>25+2<svg class="rb"><use href="#rebar"/></svg>22</td><td></td><td>G4<svg class="rb"><use href="#rebar"/></svg>12</td><td></td><td>(<svg class="rb"><use href="#rebar1"/></svg>8)</td><td><svg class="rb"><use href="#rebar"/></svg>8@</td></tr>
                        </tbody>
                    </table>
                    <div class="gutter"></div>
                </div>
                <div class="hscroll"></div>
                <div class="redbox"></div>
            </section>
        </div>
    </main>

    <footer>
        <div class="stat"><span class="s1">层高：&nbsp; 6.3</span><span class="s2">标高：&nbsp; -6.35~-0.05</span><span class="s3">选中图元：1(2)</span><span class="s4">隐藏图元：0</span></div>
        <div class="sbtns">
            <button aria-label="正交"><svg class="ic" width="14" height="16" viewBox="0 0 14 16"><path d="M4 2v13h8M4 10h4v5"/></svg></button>
            <button class="wide on" aria-label="矩形"><svg class="ic" width="16" height="16" viewBox="0 0 16 16"><path d="M3.500 14v-11h8q3 0 3 3v8"/><circle class="b" cx="3" cy="3" r="2"/></svg><i class="caret"></i></button>
            <button aria-label="交点"><svg class="ic" width="16" height="16" viewBox="0 0 16 16"><path d="M1 1l14 14M15 1l-14 14"/></svg></button>
            <button class="wide" aria-label="直线"><svg class="ic" width="14" height="16" viewBox="0 0 14 16"><path d="M1 15l10-13M4 12l3-4"/></svg><i class="caret"></i></button>
            <button class="wide" aria-label="偏移"><svg class="ic" width="16" height="16" viewBox="0 0 16 16"><path d="M1 5h7M4.500 1v8"/><path stroke-width="2" d="M7 13h8"/></svg><i class="caret"></i></button>
            <button aria-label="选择"><svg class="ic" width="14" height="16" viewBox="0 0 14 16"><path d="M1 1h12v13h-12z"/><path d="M3 3h7v8h-7z" fill="#4a5168"/></svg></button>
            <button aria-label="折线选择"><svg class="ic" width="14" height="16" viewBox="0 0 14 16"><path d="M1 15l4-10 8-3"/><path d="M7 8l6 6h-6z" fill="#4a5168"/></svg></button>
        </div>
        <div class="hint"><svg class="ic" width="16" height="16" viewBox="0 0 16 16"><path d="M1 15l14-14M10 1h5v5M1 10v5h5"/></svg>按鼠标左键指定第一个角点，或拾取构件图元</div>
        <div class="done"><svg width="14" height="14" viewBox="0 0 14 14"><circle cx="7" cy="7" r="7" fill="#6cc018"/><path d="M3.500 7l2.500 3 4.500-6" fill="none" stroke="#fff"/></svg>实时计算已完成</div>
    </footer>
</body>
</html>
```
FILE: styles.css
```css
* {
    box-sizing: border-box;
}
body {
    margin: 0;
    height: 100vh;
    overflow: hidden;
    display: flex;
    flex-direction: column;
    background: #fff;
    color: #222;
    font-family: "Noto Sans", "Noto Sans CJK SC", sans-serif;
    font-size: 12px;
    line-height: 16px;
}
button, input, select {
    font: inherit;
    color: inherit;
    border: none;
    background: none;
    padding: 0;
    margin: 0;
}
button {
    white-space: nowrap;
    cursor: pointer;
}
ul {
    list-style: none;
    margin: 0;
    padding: 0;
}
h1, h2 {
    margin: 0;
    font-size: 12px;
    font-weight: normal;
    text-align: center;
}
.sprite {
    position: absolute;
    width: 0;
    height: 0;
}

/* icons */
.ic {
    fill: none;
    stroke: #4a5168;
    flex: none;
}
.ic .b, symbol .b {
    stroke: #1a73e8;
}
.fb {
    fill: #1a73e8;
    stroke: none;
}
.lt {
    fill: #cfe2fb;
}
.dot {
    fill: #777;
    stroke: none;
}
.dis {
    stroke: #bbb;
}
.grey-ic {
    stroke: #aaa;
}
.c1 { fill: #b9c3d9; }
.c2 { fill: #8f9fc0; }
.c3 { fill: #55678f; }
.ln {
    fill: none;
    stroke: #c5cfe2;
}
.active .ln {
    stroke: #7cb8f8;
}
.mt {
    fill: none;
    stroke: #55678f;
}
.caret {
    flex: none;
    width: 0;
    height: 0;
    border: 3px solid transparent;
    border-top: 4px solid #444;
    border-bottom: none;
}
.caret.grey {
    border-top-color: #999;
}

/* title bar */
.titlebar {
    flex: none;
    height: 26px;
    display: grid;
    grid-template-columns: 1fr auto 1fr;
    align-items: center;
}
.quick {
    display: flex;
    align-items: center;
}
.logo {
    margin: 0 10px 0 3px;
}
.quick button {
    width: 34px;
    height: 24px;
    display: flex;
    align-items: center;
    justify-content: center;
    gap: 6px;
}
.quick .narrow {
    width: 18px;
    flex-direction: column;
    gap: 2px;
}
.over {
    width: 6px;
    height: 1px;
    background: #444;
}
.winbtns {
    display: flex;
    justify-content: flex-end;
}
.winbtns button {
    width: 36px;
    height: 24px;
}

/* menu tabs */
.tabs {
    flex: none;
    height: 30px;
    padding-left: 10px;
    display: flex;
    border-bottom: 1px solid #eee;
    font-size: 13px;
}
.tabs a {
    padding: 0 13px;
    line-height: 34px;
    height: 30px;
    color: #222;
    text-decoration: none;
    overflow: hidden;
}
.tabs a.active {
    color: #1a73e8;
    font-weight: bold;
    padding: 0 4px;
    margin: 0 8px;
    border-bottom: 2px solid #1a73e8;
}
.tabs-right {
    margin-left: auto;
    padding: 8px 6px 0 0;
    display: flex;
    align-items: center;
    gap: 8px;
}
.help-search {
    width: 320px;
    height: 17px;
    padding-right: 8px;
    margin-right: 3px;
    border: 1px solid #ddd;
    border-radius: 2px;
    display: flex;
    align-items: center;
}
.help-search input {
    flex: 1;
    font-size: 12px;
    line-height: 14px;
    height: 15px;
    text-indent: -3px;
    color: #000;
}
.help {
    display: flex;
    align-items: center;
    gap: 3px;
    font-size: 15px;
}

/* ribbon */
.ribbon {
    flex: none;
    height: 101px;
    display: flex;
    border-bottom: 1px solid #d4d4d4;
    padding: 2px 0 4px;
}
.group {
    border-right: 1px solid #ddd;
    display: flex;
    flex-direction: column;
    justify-content: space-between;
    padding: 1px 0 0;
}
.group h2 {
    height: 18px;
    line-height: 24px;
}
.g-options { width: 56px; }
.g-common { width: 318px; }
.g-measure { width: 192px; }
.g-aux { width: 90px; }
.g-rebar { width: 114px; }
.g-help { width: 128px; }
.g-section { width: 58px; }
.cols {
    display: flex;
    gap: 10px;
    padding-left: 10px;
}
.col {
    display: flex;
    flex-direction: column;
    align-items: flex-start;
    gap: 8px;
    padding-top: 5px;
}
.g-common .col:nth-child(1) { width: 78px; }
.g-common .col:nth-child(2) { width: 94px; }
.g-measure .col:nth-child(1) { width: 68px; }
.col button, .col label {
    height: 16px;
    display: flex;
    align-items: center;
    gap: 4px;
    white-space: nowrap;
}
.col button:disabled, .gtools button:disabled {
    color: #aaa;
}
.col button:disabled .ic {
    stroke: #bbb;
}
.col input {
    appearance: none;
    width: 14px;
    height: 14px;
    border: 1px solid #777;
    border-radius: 1px;
}
.unit {
    width: 16px;
    height: 16px;
    font-size: 6px;
    line-height: 6px;
    color: #4a5168;
    text-align: right;
}
.unit svg {
    display: block;
    margin-left: 8px;
}
.bigs {
    display: flex;
    justify-content: center;
    gap: 9px;
    padding-top: 4px;
}
.big {
    display: flex;
    flex-direction: column;
    align-items: center;
    gap: 8px;
}

/* floor / component selectors */
.combos {
    flex: none;
    height: 31px;
    display: flex;
    background: #f0f0f0;
}
.combo {
    width: 100px;
    border-right: 1px solid #d4d4d4;
    display: flex;
    align-items: center;
    padding: 0 5px 0 3px;
}
.combo select {
    flex: 1;
    appearance: none;
}

/* panels */
main {
    flex: 1;
    min-height: 0;
    display: flex;
    gap: 4px;
}
.panel {
    border: 1px solid #d4d4d4;
    background: #fff;
    display: flex;
    flex-direction: column;
    min-height: 0;
}
.phead {
    flex: none;
    height: 28px;
    background: #ededf0;
    display: flex;
    align-items: center;
    padding: 0 10px 0 6px;
}
.phead span {
    margin-left: 11px;
}
.phead .x {
    margin-left: auto;
    height: 16px;
}
.phead .x .ic {
    stroke: #999;
}
.ptab {
    height: 28px;
    padding: 1px 10px 0;
}
.grip + .ptab {
    margin-left: 9px;
}
.ptab.on {
    background: #fff;
    color: #1a73e8;
}
.vscroll {
    width: 4px;
    border-radius: 2px;
    background: #e6e6e8;
}

.navpanel {
    width: 130px;
}
.navbody {
    flex: 1;
    min-height: 0;
    display: flex;
    gap: 4px;
}
.navlist {
    width: 116px;
    background: #f5f6f8;
}
.cat {
    position: relative;
    height: 42px;
    display: flex;
    align-items: center;
    gap: 14px;
    padding: 2px 0 0 11px;
    white-space: nowrap;
}
.cat svg {
    flex: none;
}
.cat.active {
    background: #eaebef;
    color: #3a78e0;
}
.sub {
    height: 28px;
    line-height: 30px;
    padding-left: 21px;
    background: #fff;
    white-space: nowrap;
}
.sub.on {
    color: #1a73e8;
}
.red {
    position: absolute;
    left: 35px;
    top: 5px;
    width: 6px;
    height: 6px;
    border-radius: 50%;
    background: #f00;
}
.trial {
    position: absolute;
    right: 0;
    top: 5px;
    width: 51px;
    height: 20px;
    line-height: 20px;
    padding-left: 6px;
    overflow: hidden;
    border-radius: 10px 0 0 6px;
    background: linear-gradient(90deg, #f5d9a8, #e8b866);
    color: #6b3d10;
    font-size: 11px;
}
.lock {
    position: absolute;
    right: 0;
    top: 16px;
    fill: none;
    stroke: #555;
}
.nav-scroll {
    margin: 79px 0 11px;
}

.mid {
    width: 280px;
    display: flex;
    flex-direction: column;
    gap: 4px;
}
.complist {
    height: 385px;
}
.ctools {
    display: flex;
    gap: 9px;
    padding: 7px 10px;
}
.ctools button {
    width: 32px;
    height: 26px;
    background: #f3f3f4;
    border-radius: 3px;
    display: flex;
    align-items: center;
    justify-content: center;
}
.split {
    display: flex;
    gap: 1px;
}
.ctools .dd {
    width: 12px;
}
.ctools .more {
    width: 26px;
    margin-left: auto;
    border: 1px solid #ccc;
}
.csearch {
    margin: 0 9px 0 8px;
    height: 26px;
    padding: 1px 11px 0;
    border-radius: 13px;
    background: #f3f3f4;
    display: flex;
    align-items: center;
}
.csearch input {
    flex: 1;
}
.csearch input::placeholder {
    color: #777;
    opacity: 1;
}
.treewrap {
    flex: 1;
    min-height: 0;
    overflow: hidden;
    display: flex;
    justify-content: space-between;
    padding: 9px 8px 0 4px;
}
.tree li {
    height: 21px;
    line-height: 20px;
    margin: 0 0 3px 17px;
    padding-left: 3px;
    border-radius: 2px;
    width: 79px;
    white-space: nowrap;
}
.tree .root {
    display: flex;
    align-items: center;
    gap: 4px;
    margin-left: 0;
    padding: 2px 0 0 1px;
    height: 24px;
}
.tree .sel {
    background: #c2daf2;
}
.tree-scroll {
    height: 62px;
    margin-top: 12px;
}

.props {
    flex: 1;
}
.pbody {
    flex: 1;
    min-height: 0;
    display: flex;
    gap: 4px;
    padding-top: 1px;
}
.plist {
    width: 266px;
}
.prow {
    height: 25px;
    display: flex;
    align-items: center;
}
.prow label, .prow span {
    width: 101px;
    padding-left: 14px;
    white-space: nowrap;
}
.prow input {
    flex: 1;
    min-width: 0;
    height: 21px;
    border: 1px solid #d8d8d8;
    padding: 0 2px;
    margin-right: 1px;
}
.prow .ro {
    color: #888;
}
.blue {
    color: #1a5cf0;
}
.ph {
    background: #ebebed;
    border-bottom: 1px solid #ccc;
}
.ph span {
    padding: 0;
    border-right: 1px solid #ccc;
    line-height: 24px;
    text-align: center;
}
.ph b {
    flex: 1;
    border-right: 1px solid #ccc;
    line-height: 24px;
    text-align: center;
    font-weight: 500;
}
.pgroup {
    width: 100%;
    height: 24px;
    margin-bottom: 1px;
    background: #ebebed;
    display: flex;
    align-items: center;
    gap: 7px;
    padding: 1px 0 0 11px;
}
.tri {
    border: 3px solid transparent;
    border-left: 4px solid #888;
    border-right: none;
}
.prop-scroll {
    margin: 195px 0 11px;
}

/* drawing area */
.work {
    flex: 1;
    min-width: 0;
    display: flex;
    flex-direction: column;
    gap: 5px;
}
.canvas {
    flex: 1;
    min-height: 0;
    position: relative;
    background: #000;
    overflow: hidden;
}
.drawing {
    display: block;
    isolation: isolate;
}
.mark {
    font-family: "Noto Sans CJK SC", sans-serif;
    font-size: 34px;
    fill: #fff;
    mix-blend-mode: difference;
}
.cad {
    font-family: Roboto, sans-serif;
    font-weight: 100;
    font-size: 36px;
    fill: #fff;
}
.cad .teal {
    fill: #00a0a0;
}
.bubble {
    font-size: 19px;
    fill: #fff;
    text-anchor: middle;
}
.axes {
    font-size: 16px;
    text-anchor: middle;
}
.cadbox {
    position: absolute;
    left: 0;
    top: 0;
    width: 149px;
    padding: 0 5px 5px 7px;
    background: #1c456f;
    border: 1px solid #2a6aa8;
    outline: 1px solid #12304f;
    outline-offset: -1px;
    color: #fff;
    display: flex;
    flex-direction: column;
    gap: 6px;
}
.cadhead {
    height: 13px;
    margin: 0 -5px 0 -7px;
    padding-right: 4px;
    background: #15365a;
    border-bottom: 1px solid #0e2742;
    text-align: right;
    line-height: 10px;
}
.cadhead svg {
    stroke: #b8d4f0;
    stroke-width: 2;
}
.cadrow {
    display: flex;
    height: 26px;
    border: 1px solid #14365c;
    background: #205080;
}
.cadrow button {
    flex: 1;
    padding-top: 1px;
}
.cadrow .dd {
    flex: 0 0 16px;
    border-left: 1px solid #14365c;
    display: flex;
    align-items: center;
    justify-content: center;
}
.cadrow .caret {
    border-width: 4px 4px 0;
    border-top-color: #fff;
}
.viewbar {
    position: absolute;
    right: 0;
    top: 0;
    width: 33px;
    padding: 12px 0 14px;
    background: #fff;
    border: 1px solid #ccc;
    border-radius: 2px;
    display: flex;
    flex-direction: column;
    align-items: center;
    gap: 9px;
}
.viewbar button {
    height: 20px;
}
.viewbar svg {
    display: block;
}
.viewbar text {
    font-size: 8px;
    font-weight: bold;
    fill: #1a73e8;
    stroke: none;
}
.viewbar .caret {
    margin: -2px 0;
    border-width: 4px 3px 0;
}
.cubeb {
    stroke: #1a73e8;
    fill: #cfe2fb;
}
.viewbar hr {
    width: 23px;
    margin: -2px 0;
    border: none;
    border-top: 1px solid #666;
}

/* beam table */
.gridpanel {
    position: relative;
    height: 268px;
}
.gtools {
    display: flex;
    gap: 12px;
    padding: 6px 5px;
    height: 28px;
}
.gwrap {
    flex: 1;
    min-height: 0;
    overflow: hidden;
    display: flex;
    flex-direction: column;
    align-items: flex-start;
}
.gutter {
    flex: 1;
    width: 7px;
    background: #ededee;
}
table {
    table-layout: fixed;
    border-collapse: collapse;
    width: 1548px;
}
.w6 { width: 6px; }
.w41 { width: 41px; }
.w61 { width: 61px; }
.w81 { width: 81px; }
.w101 { width: 101px; }
th, td {
    border: 1px solid #d8d8d8;
    border-left: none;
    padding: 0;
    height: 17px;
    line-height: 16px;
    font-weight: normal;
    white-space: nowrap;
    overflow: hidden;
}
td {
    height: 21px;
    padding-left: 3px;
}
td.num, th:first-child[rowspan] {
    padding: 0;
    background: #ededee;
}
th.cut {
    text-align: left;
    padding-left: 18px;
}
.rb {
    width: 10px;
    height: 12px;
    margin: 0 1px;
    fill: none;
    stroke: #222;
}
.hscroll {
    width: 814px;
    height: 4px;
    margin: 4px 0 4px 12px;
    border-radius: 2px;
    background: #e6e6e8;
}
.redbox {
    position: absolute;
    left: 304px;
    top: 57px;
    width: 199px;
    height: 88px;
    border: 3px solid #ff1e10;
    border-radius: 3px;
}

/* status bar */
footer {
    flex: none;
    height: 19px;
    overflow: hidden;
    background: #fbfbfb;
    display: flex;
    align-items: flex-start;
    padding-top: 3px;
    white-space: nowrap;
}
.stat {
    display: flex;
    width: 452px;
    padding: 4px 0 0 2px;
}
.s1 { width: 89px; }
.s2 { width: 140px; }
.s3 { width: 110px; }
.sbtns {
    display: flex;
    gap: 4px;
}
.sbtns button {
    width: 25px;
    height: 24px;
    border: 1px solid #999;
    border-radius: 2px;
    display: flex;
    align-items: center;
    justify-content: center;
    gap: 5px;
}
.sbtns .wide {
    width: 36px;
}
.sbtns .on {
    background: #d4e5fa;
    border-color: #1a73e8;
}
.hint {
    display: flex;
    gap: 4px;
    padding: 4px 0 0 15px;
}
.done {
    margin-left: auto;
    display: flex;
    gap: 6px;
    padding: 4px 11px 0 0;
}
```
